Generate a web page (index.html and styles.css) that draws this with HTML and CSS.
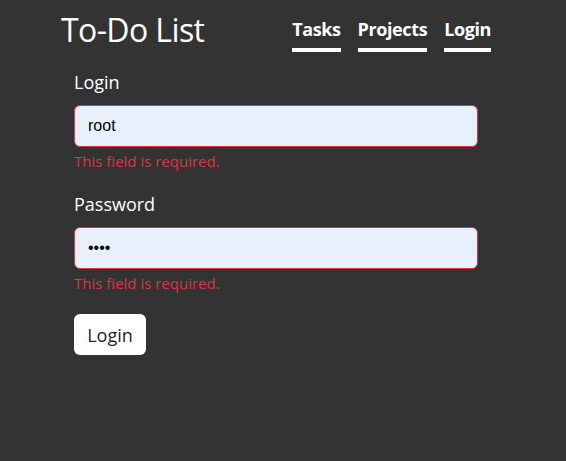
FILE: index.html
```html
<!DOCTYPE html>
<html lang="en">
<head>
<meta charset="utf-8">
<title>To-Do List</title>
<link rel="stylesheet" href="styles.css">
</head>
<body>
<header class="site-header">
  <h1 class="brand">To-Do List</h1>
  <nav class="nav">
    <a class="nav-link" href="#">Tasks</a>
    <a class="nav-link" href="#">Projects</a>
    <a class="nav-link" href="#">Login</a>
  </nav>
</header>
<main class="content">
  <form class="login-form">
    <div class="field">
      <label class="field-label" for="login">Login</label>
      <input class="field-input" id="login" type="text" value="root">
      <div class="field-error">This field is required.</div>
    </div>
    <div class="field">
      <label class="field-label" for="password">Password</label>
      <input class="field-input" id="password" type="password" value="root">
      <div class="field-error">This field is required.</div>
    </div>
    <button class="submit-btn" type="button">Login</button>
  </form>
</main>
</body>
</html>
```
FILE: styles.css
```css
html, body {
  margin: 0;
  padding: 0;
}
body {
  background: #333333;
  color: #ffffff;
  font-family: "Open Sans", "Noto Sans", sans-serif;
  height: 461px;
  overflow: hidden;
}
.site-header {
  display: flex;
  justify-content: space-between;
  align-items: flex-start;
  width: 430px;
  margin-left: 61px;
  padding-top: 10px;
}
.brand {
  margin: 0;
  font-size: 32px;
  line-height: 40px;
  font-weight: 400;
  letter-spacing: -0.6px;
}
.nav {
  display: flex;
  gap: 17px;
  margin-top: 7px;
}
.nav-link {
  display: block;
  color: #ffffff;
  text-decoration: none;
  font-weight: 700;
  font-size: 18px;
  line-height: 24px;
  padding-bottom: 7px;
  border-bottom: 4px solid #ffffff;
  letter-spacing: -0.4px;
}
.content {
  margin-left: 74px;
  width: 404px;
}
.login-form {
  display: flex;
  flex-direction: column;
  align-items: flex-start;
  padding-top: 18px;
}
.field {
  display: flex;
  flex-direction: column;
  width: 100%;
  margin-bottom: 21px;
}
.field-label {
  font-size: 18px;
  line-height: 24px;
  margin-bottom: 11px;
}
.field-input {
  box-sizing: border-box;
  width: 404px;
  height: 42px;
  margin: 0;
  padding: 0 13px;
  border: 1px solid #dc3545;
  border-radius: 6px;
  background: #e8f0fe;
  color: #000000;
  font-family: "Liberation Sans", Arial, sans-serif;
  font-size: 16px;
  outline: none;
}
.field-error {
  margin-top: 4px;
  color: #dc3545;
  font-size: 15px;
  line-height: 20px;
}
.submit-btn {
  box-sizing: border-box;
  width: 72px;
  height: 41px;
  padding: 0;
  border: none;
  border-radius: 6px;
  background: #ffffff;
  color: #212529;
  font-family: "Open Sans", "Noto Sans", sans-serif;
  font-size: 18px;
  cursor: pointer;
}
```
